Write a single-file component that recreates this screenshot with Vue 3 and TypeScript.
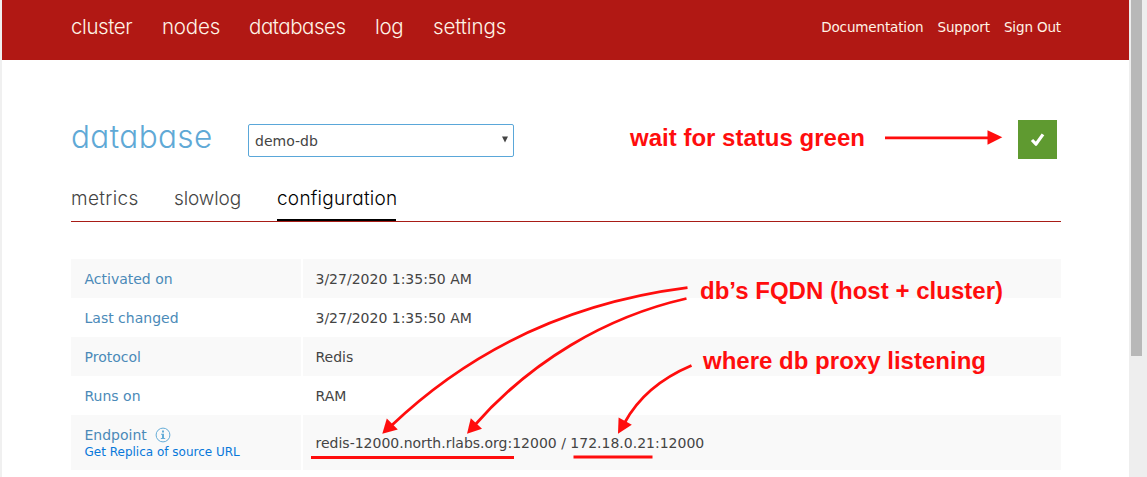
<script setup lang="ts">
interface NavItem { id: string; label: string }
interface ConfigRow { label: string; value: string; info?: boolean; link?: string }

const navItems: NavItem[] = [
  { id: 'cluster', label: 'cluster' },
  { id: 'nodes', label: 'nodes' },
  { id: 'databases', label: 'databases' },
  { id: 'log', label: 'log' },
  { id: 'settings', label: 'settings' },
]
const userLinks: NavItem[] = [
  { id: 'documentation', label: 'Documentation' },
  { id: 'support', label: 'Support' },
  { id: 'signout', label: 'Sign Out' },
]
const tabs: NavItem[] = [
  { id: 'metrics', label: 'metrics' },
  { id: 'slowlog', label: 'slowlog' },
  { id: 'configuration', label: 'configuration' },
]
const activeTab = 'configuration'
const rows: ConfigRow[] = [
  { label: 'Activated on', value: '3/27/2020 1:35:50 AM' },
  { label: 'Last changed', value: '3/27/2020 1:35:50 AM' },
  { label: 'Protocol', value: 'Redis' },
  { label: 'Runs on', value: 'RAM' },
  {
    label: 'Endpoint',
    value: 'redis-12000.north.rlabs.org:12000 / 172.18.0.21:12000',
    info: true,
    link: 'Get Replica of source URL',
  },
]
</script>

<template>
  <div class="window">
    <div class="page">
      <header class="topbar">
        <nav class="nav">
          <a v-for="item in navItems" :key="item.id" :class="['nav-item', item.id]"><span>{{ item.label }}</span></a>
        </nav>
        <div class="user-links">
          <a v-for="item in userLinks" :key="item.id" :class="item.id">{{ item.label }}</a>
        </div>
      </header>

      <main class="content">
        <div class="heading">
          <h1>database</h1>
          <div class="select">
            <span>demo-db</span>
            <svg width="6" height="7" viewBox="0 0 6 7"><path d="M0 0.5h6L3 6.5z" fill="#444" /></svg>
          </div>
          <div class="status">
            <svg width="39" height="39" viewBox="0 0 39 39">
              <path d="M14 20L18 24.200L25 14.300" fill="none" stroke="#fff" stroke-width="3.2" stroke-linejoin="round" stroke-linecap="butt" />
            </svg>
          </div>
        </div>

        <div class="tabs">
          <a v-for="tab in tabs" :key="tab.id" :class="['tab', tab.id, { active: tab.id === activeTab }]"><span>{{ tab.label }}</span></a>
        </div>

        <div class="config">
          <div v-for="row in rows" :key="row.label" :class="['row', { tall: row.link }]">
            <div class="key">
              <div class="key-line">
                <span>{{ row.label }}</span>
                <svg v-if="row.info" class="info" width="16" height="16" viewBox="0 0 16 16">
                  <circle cx="8" cy="8" r="6.9" fill="none" stroke="#66add8" stroke-width="1" />
                  <path d="M7 3.6h2v1.8H7zM6 6.7h3v4.4h1.2v1H5.8v-1H7V7.7H6z" fill="#66add8" />
                </svg>
              </div>
              <a v-if="row.link" class="replica">{{ row.link }}</a>
            </div>
            <div class="value">{{ row.value }}</div>
          </div>
        </div>
      </main>
    </div>

    <div class="scrollbar"><div class="thumb"></div></div>

    <svg class="annotations" width="1147" height="477" viewBox="0 0 1147 477">
      <g class="note">
        <text x="630" y="146" textLength="235">wait for status green</text>
        <text x="700" y="299" textLength="303">db’s FQDN (host + cluster)</text>
        <text x="703" y="369" textLength="283">where db proxy listening</text>
      </g>
      <g class="stroke">
        <path d="M885 137.8H990" />
        <path d="M687.5 287.7C575 302 475 346 391 426" />
        <path d="M686.5 298.5C605 317 530 362 474 426" />
        <path d="M691.5 365.5C662 378 639 396 624.500 423" />
        <path d="M311 457.500H514" />
        <path d="M573.500 457H652.500" />
      </g>
      <g fill="#ff0d0d">
        <path d="M987.500 130.200L1002.300 137.300L987.500 144.800z" />
        <path d="M382.300 433.800L386.800 418.500L397.800 429.500z" />
        <path d="M467 433.800L470.800 418.300L482 428.700z" />
        <path d="M618 433.700L618.600 417.500L631.800 424.800z" />
      </g>
    </svg>
  </div>
</template>

<style>
body { margin: 0; background: #fff; overflow: hidden; }
</style>

<style scoped>
.window {
  position: relative;
  display: flex;
  width: 1147px;
  height: 477px;
  box-sizing: border-box;
  border-left: 2px solid #f0f0f0;
  overflow: hidden;
  background: #fff;
  font-family: "DejaVu Sans", sans-serif;
  color: #444;
}
.page { width: 1127px; flex: none; }
.topbar {
  display: flex;
  justify-content: space-between;
  box-sizing: border-box;
  height: 60px;
  padding: 0 68px 0 69px;
  background: #b11814;
  color: #fff3e6;
}
.nav { display: flex; gap: 30px; }
.nav-item, .tab, h1 {
  font-family: Inter, sans-serif;
  font-feature-settings: "cv11";
  font-weight: 260;
  white-space: nowrap;
}
.nav-item { font-size: 20.5px; line-height: 54px; }
.nav-item.cluster { width: 61px; letter-spacing: -0.4px; }
.nav-item.nodes { width: 57px; letter-spacing: -0.2px; }
.nav-item.databases { width: 96px; letter-spacing: -0.45px; }
.nav-item.log { width: 28px; letter-spacing: -0.3px; }
.nav-item.settings { width: 72px; letter-spacing: -0.1px; }
.user-links {
  display: flex;
  gap: 14px;
  font-size: 13.5px;
  letter-spacing: -0.14px;
  line-height: 55px;
  white-space: nowrap;
}
.content { padding: 60px 68px 0 69px; }
.heading { display: flex; height: 62px; }
h1 {
  width: 177px;
  margin: 0;
  font-size: 31.5px;
  letter-spacing: 0.4px;
  line-height: 34px;
  color: #5fa9d6;
}
.select {
  display: flex;
  align-items: center;
  justify-content: space-between;
  box-sizing: border-box;
  width: 266px;
  height: 33px;
  margin-top: 4px;
  padding: 0 5px 0 6px;
  border: 1px solid #5aa7d9;
  border-radius: 2px;
  font-size: 14px;
}
.select svg { margin-bottom: 2px; }
.status { width: 39px; height: 39px; margin: 0 4px 0 auto; background: #5f9a30; }
.status svg { display: block; }
.tabs {
  display: flex;
  gap: 36px;
  height: 39px;
  border-bottom: 1px solid #a81c16;
}
.tab { box-sizing: border-box; height: 39px; font-size: 19px; line-height: 34px; color: #444; }
.tab.metrics { width: 67px; letter-spacing: 0.35px; }
.tab.slowlog { width: 67px; letter-spacing: -0.1px; }
.tab.configuration { width: 119px; letter-spacing: 0.25px; }
.tab.active { border-bottom: 2px solid #000; color: #000; }
.config { margin-top: 37px; }
.row { display: flex; gap: 2px; height: 39px; font-size: 14px; }
.row.tall { height: 55px; }
.row:nth-child(odd) .key, .row:nth-child(odd) .value { background: #f9f9f9; }
.key { box-sizing: border-box; width: 230px; padding: 11px 0 0 13.5px; color: #4b8ab8; }
.key-line { display: flex; align-items: center; height: 18px; }
.info { margin-left: 8.5px; }
.replica { display: block; font-size: 12px; line-height: 16px; color: #0878da; white-space: nowrap; }
.value { flex: 1; display: flex; align-items: center; padding: 0 0 0 12.5px; white-space: nowrap; }
.scrollbar { flex: 1; padding-left: 2px; background: #eee; }
.thumb { width: 11px; height: 356px; background: #b8b8b8; }
.annotations { position: absolute; left: -2px; top: 0; }
.note { font: bold 24px "Liberation Sans", Arial, sans-serif; fill: #ff0d0d; }
.stroke { fill: none; stroke: #ff0d0d; stroke-width: 2.8; }
</style>
